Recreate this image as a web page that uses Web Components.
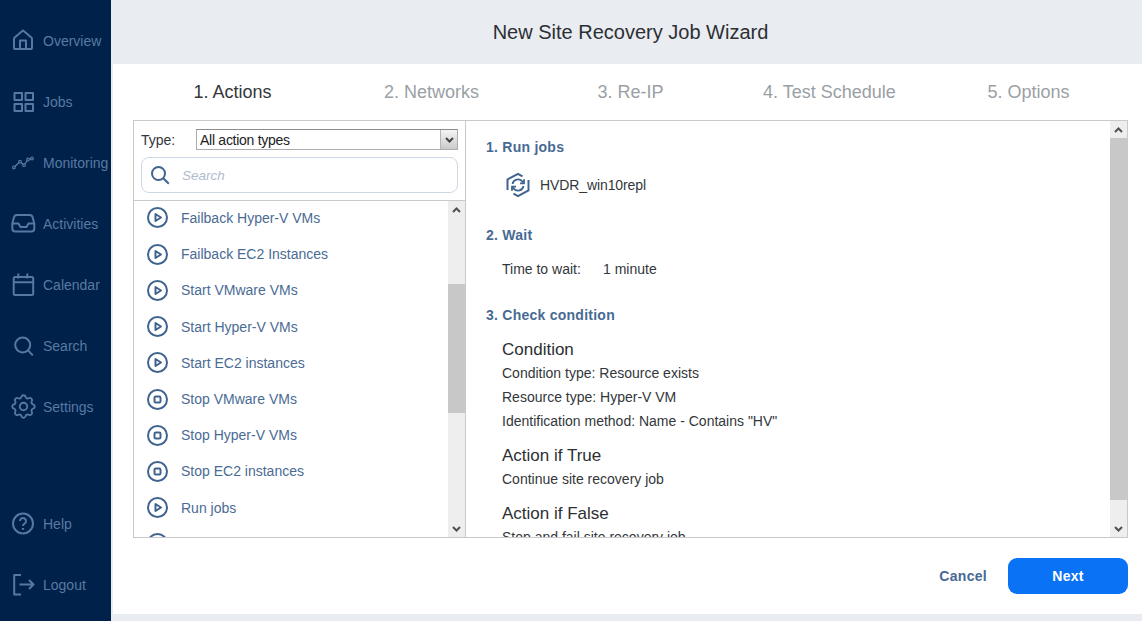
<!DOCTYPE html>
<html>
<head>
<meta charset="utf-8">
<title>New Site Recovery Job Wizard</title>
<style>
  html, body { margin: 0; height: 100%; }
  body { font-family: "Liberation Sans", Arial, sans-serif; overflow: hidden; }
</style>
</head>
<body>
<app-shell>
  <side-bar slot="side">
    <nav-item label="Overview" icon="home"></nav-item>
    <nav-item label="Jobs" icon="grid"></nav-item>
    <nav-item label="Monitoring" icon="chart"></nav-item>
    <nav-item label="Activities" icon="inbox"></nav-item>
    <nav-item label="Calendar" icon="calendar"></nav-item>
    <nav-item label="Search" icon="search"></nav-item>
    <nav-item label="Settings" icon="gear"></nav-item>
    <nav-item slot="bottom" label="Help" icon="help"></nav-item>
    <nav-item slot="bottom" label="Logout" icon="logout"></nav-item>
  </side-bar>
  <wizard-view slot="main">
    <action-pane slot="left">
      <action-row kind="play">Failback Hyper-V VMs</action-row>
      <action-row kind="play">Failback EC2 Instances</action-row>
      <action-row kind="play">Start VMware VMs</action-row>
      <action-row kind="play">Start Hyper-V VMs</action-row>
      <action-row kind="play">Start EC2 instances</action-row>
      <action-row kind="stop">Stop VMware VMs</action-row>
      <action-row kind="stop">Stop Hyper-V VMs</action-row>
      <action-row kind="stop">Stop EC2 instances</action-row>
      <action-row kind="play">Run jobs</action-row>
      <action-row kind="play"></action-row>
    </action-pane>
    <plan-pane slot="right"></plan-pane>
  </wizard-view>
</app-shell>

<script>
const ICONS = {
  home: '<path d="M2 19V9.500a1 1 0 0 1 .4-.8L10.300 1.900a1 1 0 0 1 1.400 0l7.900 6.800a1 1 0 0 1 .4.8V19a1 1 0 0 1-1 1H3a1 1 0 0 1-1-1z"/><path d="M8 20v-8.500h6V20"/>',
  grid: '<rect x="2.500" y="3" width="7.500" height="7"/><rect x="13.500" y="3" width="7.500" height="7"/><rect x="2.500" y="14" width="7.500" height="7"/><rect x="13.500" y="14" width="7.500" height="7"/>',
  chart: '<path stroke-width="1.300" d="M1.700 16.500 8 10.700l4 3.500 4-5.700 4-1"/><g fill="#00214a" stroke-width="1.200"><circle cx="1.900" cy="16.400" r="1.300"/><circle cx="8" cy="10.700" r="1.300"/><circle cx="12" cy="14.200" r="1.300"/><circle cx="16" cy="8.500" r="1.300"/><circle cx="20" cy="7.500" r="1.300"/></g>',
  inbox: '<path d="M5.500 3h11.500a3 3 0 0 1 2.800 2.200l1.700 6.300v5a3 3 0 0 1-3 3H2.500a3 3 0 0 1-3-3v-5l1.700-6.300A3 3 0 0 1 4 3z" transform="translate(.8 0)"/><path d="M.8 11.500h5.700l2 3.500h6l2-3.500h5.700"/>',
  calendar: '<rect x="1.700" y="4" width="19.500" height="18" rx="1.500"/><path d="M1.700 9.200h19.500M6.300 .5V5.500M15.300 .5V5.500"/>',
  search: '<circle cx="10.700" cy="11" r="7.500"/><path d="m16 16.400 4.800 5"/>',
  gear: '<g transform="translate(11.500 11.500) scale(1.250) translate(-12 -12)" stroke-width="1.500"><path d="M10.325 4.317c.426-1.756 2.924-1.756 3.350 0a1.724 1.724 0 0 0 2.573 1.066c1.543-.940 3.310.826 2.370 2.370a1.724 1.724 0 0 0 1.065 2.572c1.756.426 1.756 2.924 0 3.350a1.724 1.724 0 0 0-1.066 2.573c.940 1.543-.826 3.310-2.370 2.370a1.724 1.724 0 0 0-2.572 1.065c-.426 1.756-2.924 1.756-3.350 0a1.724 1.724 0 0 0-2.573-1.066c-1.543.940-3.310-.826-2.370-2.370a1.724 1.724 0 0 0-1.065-2.572c-1.756-.426-1.756-2.924 0-3.350a1.724 1.724 0 0 0 1.066-2.573c-.940-1.543.826-3.310 2.370-2.370.996.608 2.296.070 2.572-1.065z"/><circle cx="12" cy="12" r="3"/></g>',
  help: '<circle cx="11" cy="11.500" r="10"/><path d="M8 9a3 3 0 1 1 4.700 2.500C11.600 12.200 11 12.700 11 14"/><path stroke-width="2.200" d="M11 16v1.800"/>',
  logout: '<path d="M9 2H2.200v19.500H9"/><path d="M7.500 11.500h14M17 7l4.500 4.500L17 16"/>'
};

const shellTpl = document.createElement("template");
shellTpl.innerHTML = `
  <style>
    :host { display: flex; width: 1142px; height: 621px; background: #e9ecf1; }
    .side { flex: 0 0 111px; display: flex; }
    .main { flex: 1; min-width: 0; margin-left: 2px; display: flex; }
  </style>
  <div class="side"><slot name="side"></slot></div>
  <div class="main"><slot name="main"></slot></div>
`;
class AppShell extends HTMLElement {
  constructor() {
    super();
    this.attachShadow({ mode: "open" }).appendChild(shellTpl.content.cloneNode(true));
  }
}
customElements.define("app-shell", AppShell);

const sideTpl = document.createElement("template");
sideTpl.innerHTML = `
  <style>
    :host {
      display: flex;
      flex-direction: column;
      justify-content: space-between;
      width: 111px;
      background: #00214a;
      padding: 10px 0 6px;
      box-sizing: border-box;
    }
    .group { display: flex; flex-direction: column; }
  </style>
  <div class="group"><slot></slot></div>
  <div class="group"><slot name="bottom"></slot></div>
`;
class SideBar extends HTMLElement {
  constructor() {
    super();
    this.attachShadow({ mode: "open" }).appendChild(sideTpl.content.cloneNode(true));
  }
}
customElements.define("side-bar", SideBar);

class NavItem extends HTMLElement {
  constructor() {
    super();
    const icon = ICONS[this.getAttribute("icon")];
    this.attachShadow({ mode: "open" }).innerHTML = `
      <style>
        :host {
          display: flex;
          align-items: center;
          height: 61px;
          padding-left: 12px;
          color: #587aa3;
          font-size: 14px;
          white-space: nowrap;
        }
        svg {
          width: 23px;
          height: 23px;
          flex: none;
          margin-right: 8px;
          fill: none;
          stroke: #5678a2;
          stroke-width: 2;
          overflow: visible;
          stroke-linejoin: round;
        }
      </style>
      <svg viewBox="0 0 23 23">${icon}</svg><span>${this.getAttribute("label")}</span>
    `;
  }
}
customElements.define("nav-item", NavItem);

const wizardTpl = document.createElement("template");
wizardTpl.innerHTML = `
  <style>
    :host { display: flex; flex-direction: column; flex: 1; min-width: 0; }
    header {
      height: 64px;
      display: flex;
      align-items: center;
      justify-content: center;
      color: #2c2f33;
      font-size: 20px;
      padding-left: 6px;
      box-sizing: border-box;
    }
    .body { height: 550px; background: #fff; display: flex; flex-direction: column; }
    .steps { display: grid; grid-template-columns: repeat(5, 199px); height: 56px; padding-left: 20px; align-items: center; font-size: 18px; color: #9a9fa5; }
    .steps span { text-align: center; }
    .steps .on { color: #33373b; }
    .panel {
      margin-left: 20px;
      width: 995px;
      height: 418px;
      box-sizing: border-box;
      border: 1px solid #c9c9c9;
      display: flex;
    }
    .foot { display: flex; justify-content: flex-end; align-items: center; gap: 21px; height: 76px; padding-right: 14px; }
    .cancel { font-size: 14px; font-weight: bold; color: #476a94; letter-spacing: .3px; }
    .next {
      width: 120px;
      height: 36px;
      border-radius: 9px;
      background: #0a72f5;
      color: #fff;
      font-size: 14px;
      font-weight: bold;
      letter-spacing: .3px;
      display: flex;
      align-items: center;
      justify-content: center;
    }
  </style>
  <header>New Site Recovery Job Wizard</header>
  <div class="body">
    <div class="steps">
      <span class="on">1. Actions</span><span>2. Networks</span><span>3. Re-IP</span><span>4. Test Schedule</span><span>5. Options</span>
    </div>
    <div class="panel">
      <slot name="left"></slot>
      <slot name="right"></slot>
    </div>
    <div class="foot"><span class="cancel">Cancel</span><span class="next">Next</span></div>
  </div>
`;
class WizardView extends HTMLElement {
  constructor() {
    super();
    this.attachShadow({ mode: "open" }).appendChild(wizardTpl.content.cloneNode(true));
  }
}
customElements.define("wizard-view", WizardView);

class ScrollRail extends HTMLElement {
  constructor() {
    super();
    const before = this.getAttribute("before");
    const thumb = this.getAttribute("thumb");
    this.attachShadow({ mode: "open" }).innerHTML = `
      <style>
        :host { display: flex; flex-direction: column; flex: 0 0 17px; width: 17px; background: #eeeeee; }
        .btn { height: 17px; flex: none; display: flex; align-items: center; justify-content: center; }
        .btn svg { width: 9px; height: 6px; fill: none; stroke: #505050; stroke-width: 2; }
        .gap { flex: none; height: ${before}px; }
        .thumb { flex: none; height: ${thumb}px; background: #c8c8c8; }
        .end { flex: 1; }
      </style>
      <div class="btn"><svg viewBox="0 0 9 6"><path d="M1 5l3.500-3.500L8 5"/></svg></div>
      <div class="gap"></div>
      <div class="thumb"></div>
      <div class="end"></div>
      <div class="btn"><svg viewBox="0 0 9 6"><path d="M1 1l3.500 3.500L8 1"/></svg></div>
    `;
  }
}
customElements.define("scroll-rail", ScrollRail);

class ActionRow extends HTMLElement {
  constructor() {
    super();
    const glyph = this.getAttribute("kind") === "stop"
      ? '<rect x="7.500" y="7.500" width="6" height="6" rx="1.300"/>'
      : '<path d="M8.500 7v7l5.500-3.500z" stroke-linejoin="round"/>';
    this.attachShadow({ mode: "open" }).innerHTML = `
      <style>
        :host {
          display: flex;
          align-items: center;
          flex: 0 0 36.220px;
          padding-left: 13px;
          color: #4a6b94;
          font-size: 14px;
          white-space: nowrap;
        }
        svg { width: 21px; height: 21px; flex: none; margin-right: 13px; fill: none; stroke: #41648f; stroke-width: 2; }
      </style>
      <svg viewBox="0 0 21 21"><circle cx="10.500" cy="10.500" r="9.500"/>${glyph}</svg><slot></slot>
    `;
  }
}
customElements.define("action-row", ActionRow);

const actionTpl = document.createElement("template");
actionTpl.innerHTML = `
  <style>
    :host { display: flex; flex-direction: column; flex: 0 0 331px; width: 331px; border-right: 1px solid #c9c9c9; box-sizing: content-box; }
    .filters { height: 80px; box-sizing: border-box; border-bottom: 1px solid #c9c9c9; padding: 8px 7px 0; flex: none; }
    .type { display: flex; align-items: center; height: 21px; font-size: 14px; color: #33373b; }
    .type label { flex: 0 0 55px; }
    .select {
      flex: 1;
      height: 21px;
      box-sizing: border-box;
      border: 1px solid #adadad;
      border-top-color: #8c8c8c;
      display: flex;
      align-items: center;
      padding-left: 3px;
      font-size: 14px;
      letter-spacing: -.27px;
      color: #222;
    }
    .select span { flex: 1; }
    .arrow {
      flex: 0 0 16px;
      height: 19px;
      background: linear-gradient(#f4f4f4, #cbcbcb);
      border-left: 1px solid #b5b5b5;
      display: flex;
      align-items: center;
      justify-content: center;
    }
    .arrow svg { width: 9px; height: 6px; fill: none; stroke: #444; stroke-width: 2; }
    .search {
      margin-top: 7px;
      height: 36px;
      box-sizing: border-box;
      border: 1px solid #ccd8e5;
      border-radius: 8px;
      display: flex;
      align-items: center;
      padding-left: 8px;
    }
    .search svg { width: 20px; height: 20px; flex: none; fill: none; stroke: #41648f; stroke-width: 2; margin-right: 12px; }
    .search span { font-style: italic; font-size: 13.500px; color: #aebccd; }
    .lower { flex: 1; display: flex; min-height: 0; }
    .list { flex: 1; display: flex; flex-direction: column; overflow: hidden; min-width: 0; margin-top: -1.210px; }
  </style>
  <div class="filters">
    <div class="type">
      <label>Type:</label>
      <div class="select"><span>All action types</span><div class="arrow"><svg viewBox="0 0 9 6"><path d="M1 1l3.500 3.500L8 1"/></svg></div></div>
    </div>
    <div class="search">
      <svg viewBox="0 0 20 20"><circle cx="8.500" cy="8.500" r="6.500"/><path d="m13.300 13.300 5.500 5.500"/></svg>
      <span>Search</span>
    </div>
  </div>
  <div class="lower">
    <div class="list"><slot></slot></div>
    <scroll-rail before="66" thumb="129"></scroll-rail>
  </div>
`;
class ActionPane extends HTMLElement {
  constructor() {
    super();
    this.attachShadow({ mode: "open" }).appendChild(actionTpl.content.cloneNode(true));
  }
}
customElements.define("action-pane", ActionPane);

const planTpl = document.createElement("template");
planTpl.innerHTML = `
  <style>
    :host { display: flex; flex: 1; min-width: 0; height: 416px; font-size: 14px; color: #33373b; }
    .scroll { flex: 1; overflow: hidden; padding: 16px 0 0 20px; min-width: 0; }
    h3 { margin: 0; font-size: 14px; line-height: 20px; height: 20px; color: #476a94; letter-spacing: .25px; }
    .job { margin: 14px 0 26px 20px; height: 28px; display: flex; align-items: center; gap: 10px; letter-spacing: -.1px; }
    .job svg { width: 24px; height: 24px; flex: none; fill: none; stroke: #41648f; stroke-width: 2; overflow: visible; }
    .wait { margin: 14px 0 26px 16px; line-height: 20px; display: flex; }
    .wait span:first-child { width: 101px; }
    .cond { margin-left: 16px; }
    h4 { margin: 10px 0 0; font-weight: normal; font-size: 17px; line-height: 26px; height: 24px; color: #2c2f33; }
    h4.first { margin-top: 12px; }
    p { margin: 0; line-height: 24px; }
  </style>
  <div class="scroll">
    <h3>1. Run jobs</h3>
    <div class="job">
      <svg viewBox="0 0 24 24">
        <path d="M1.500 17V6.500L12 .8l4.500 2.500M22.500 7v10.500L12 23.200l-4.500-2.500"/>
        <path stroke-width="1.800" d="M6.500 11a5.600 5.600 0 0 1 9.800-2.600l1.200 1.400M17.500 13a5.600 5.600 0 0 1-9.800 2.600l-1.200-1.400"/>
        <path stroke-width="1.800" d="M18 6.300v4h-4M6 17.700v-4h4"/>
      </svg>
      <span>HVDR_win10repl</span>
    </div>
    <h3>2. Wait</h3>
    <div class="wait"><span>Time to wait:</span><span>1 minute</span></div>
    <h3>3. Check condition</h3>
    <div class="cond">
      <h4 class="first">Condition</h4>
      <p>Condition type: Resource exists</p>
      <p>Resource type: Hyper-V VM</p>
      <p>Identification method: Name - Contains "HV"</p>
      <h4>Action if True</h4>
      <p>Continue site recovery job</p>
      <h4>Action if False</h4>
      <p>Stop and fail site recovery job</p>
    </div>
  </div>
  <scroll-rail before="0" thumb="362"></scroll-rail>
`;
class PlanPane extends HTMLElement {
  constructor() {
    super();
    this.attachShadow({ mode: "open" }).appendChild(planTpl.content.cloneNode(true));
  }
}
customElements.define("plan-pane", PlanPane);
</script>
</body>
</html>
